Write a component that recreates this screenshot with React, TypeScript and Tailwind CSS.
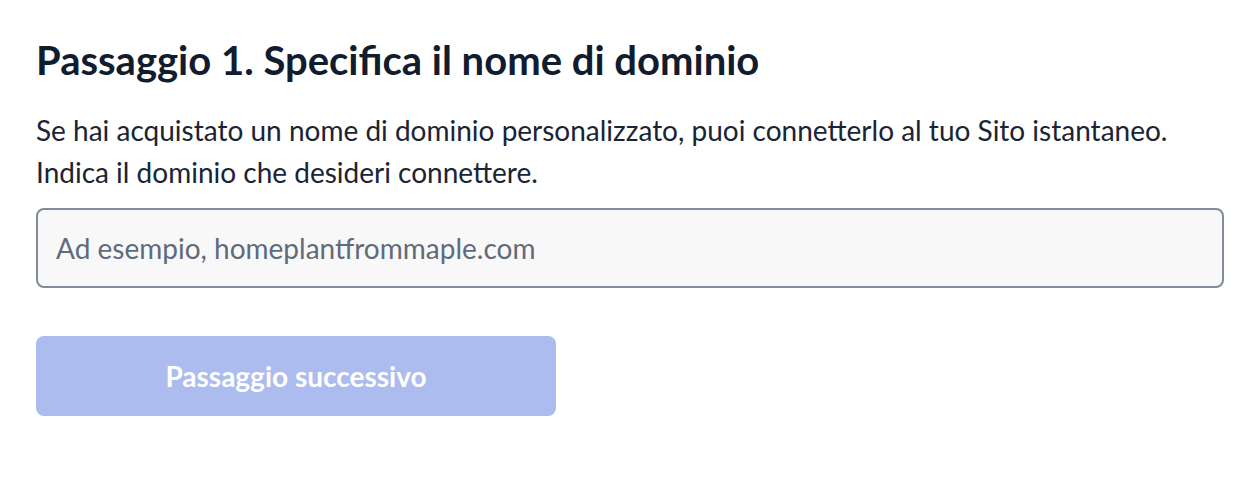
import React, { useState } from 'react';

const App: React.FC = () => {
  const [domain, setDomain] = useState('');

  return (
    <div className="min-h-[478px] w-full bg-white font-['Lato','Liberation_Sans',sans-serif] text-[#111c2e]">
      <div className="px-9 pt-9">
        <h1 className="text-[40px] font-bold leading-[48px]">
          Passaggio 1. Specifica il nome di dominio
        </h1>
        <p className="mt-[25px] text-[28px] leading-[42px] text-[#1a2434]">
          Se hai acquistato un nome di dominio personalizzato, puoi connetterlo al tuo Sito istantaneo.
          <br />
          Indica il dominio che desideri connettere.
        </p>

        <input
          type="text"
          value={domain}
          onChange={e => setDomain(e.target.value)}
          placeholder="Ad esempio, homeplantfrommaple.com"
          className="mt-[15px] h-20 w-full rounded-lg border-2 border-[#818b99] bg-[#f8f8f8] px-[18px] text-[28px] text-[#1a2434] placeholder:text-[#5f6b7c] outline-none"
        />

        {/* Disabled until a domain is entered */}
        <button
          type="button"
          disabled={domain.trim() === ''}
          className="mt-12 flex h-20 w-[520px] items-center justify-center rounded-lg bg-[#adbcef] text-[28px] font-bold text-white"
        >
          Passaggio successivo
        </button>
      </div>
    </div>
  );
};

export default App;
